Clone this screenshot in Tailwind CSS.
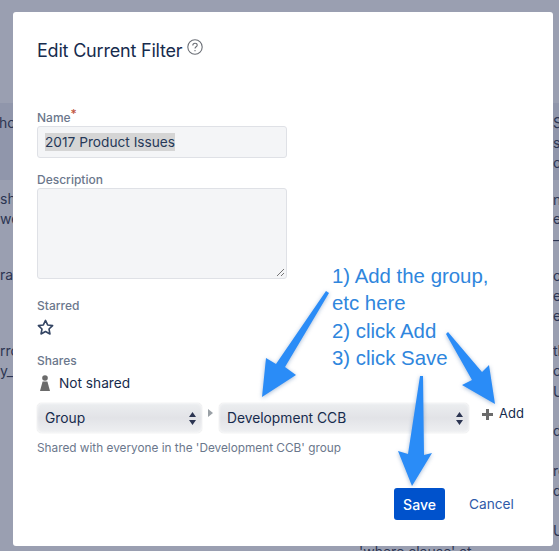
<!DOCTYPE html>
<html lang="en">
<head>
    <meta charset="UTF-8">
    <title>Edit Current Filter</title>
    <script src="https://cdn.jsdelivr.net/npm/@tailwindcss/browser@4"></script>
</head>
<body class="relative w-[559px] h-[551px] overflow-hidden bg-[#9a9fb1] font-['Inter','Liberation_Sans',sans-serif]">
    <!-- Page dimmed behind the dialog -->
    <div class="absolute left-0 top-[103px] w-full h-[77px] bg-[#9096ab]"></div>
    <div class="absolute inset-0 text-[14px] leading-5 text-[#2c3552]">
        <span class="absolute left-[-1px] top-[113px]">ho</span>
        <span class="absolute left-0 top-[189px]">sh</span>
        <span class="absolute left-0 top-[209px]">we</span>
        <span class="absolute left-0 top-[265px]">rap</span>
        <span class="absolute left-0 top-[341px]">rro</span>
        <span class="absolute left-0 top-[361px]">y_l</span>
        <span class="absolute left-[553px] top-[113px]">S</span>
        <span class="absolute left-[553px] top-[133px]">se</span>
        <span class="absolute left-[553px] top-[153px]">or</span>
        <span class="absolute left-[553px] top-[190px]">n</span>
        <span class="absolute left-[553px] top-[209px]">e</span>
        <span class="absolute left-[553px] top-[230px]">–</span>
        <span class="absolute left-[553px] top-[266px]">o</span>
        <span class="absolute left-[553px] top-[286px]">e</span>
        <span class="absolute left-[553px] top-[306px]">e</span>
        <span class="absolute left-[553px] top-[341px]">th</span>
        <span class="absolute left-[553px] top-[361px]">o</span>
        <span class="absolute left-[553px] top-[382px]">U</span>
        <span class="absolute left-[553px] top-[421px]">d</span>
        <span class="absolute left-[553px] top-[461px]">re</span>
        <span class="absolute left-[553px] top-[481px]">d</span>
        <span class="absolute left-[553px] top-[521px]">U</span>
        <span class="absolute left-[359px] top-[542px]">'where clause' at</span>
    </div>

    <!-- Dialog -->
    <div class="absolute left-[13px] top-[12px] w-[540px] h-[534px] bg-white rounded-[3px] pl-[24px] pt-[27px]">
        <div class="flex items-start h-[72px]">
            <h2 class="text-[18px] leading-[24px] tracking-[-0.2px] font-normal text-[#172b4d]">Edit Current Filter</h2>
            <svg class="ml-[5px]" width="16" height="16" viewBox="0 0 16 16" fill="none" stroke="#6b6f76" stroke-width="1.1">
                <circle cx="8" cy="8" r="7.2"/>
                <path d="M5.8 6.400c0-1.300 1-2.100 2.200-2.100s2.200.8 2.200 1.900c0 1.600-2.200 1.600-2.200 3.300"/>
                <path d="M8 11v1.200"/>
            </svg>
        </div>

        <div class="w-[250px]">
            <div class="h-[15px] text-[12px] leading-[15px] mt-[-1px] font-medium text-[#6b778c]">Name<span class="text-[#c0553f] relative top-[-4px]">*</span></div>
            <div class="h-[32px] mt-[1px] bg-[#f4f5f7] border border-[#dfe1e6] rounded-[3px] pl-[7px] flex items-center">
                <span class="bg-[#d5d5d5] text-[13.7px] leading-[18px] text-[#253858]">2017 Product Issues</span>
            </div>

            <div class="h-[15px] mt-[14px] text-[12px] leading-[15px] font-medium text-[#6b778c]">Description</div>
            <div class="relative h-[91px] mt-[1px] bg-[#f4f5f7] border border-[#dfe1e6] rounded-[3px]">
                <svg class="absolute right-[1px] bottom-[1px]" width="9" height="9" viewBox="0 0 9 9" stroke="#555" stroke-width="0.8">
                    <path d="M1 8 8 1M5 8l3-3"/>
                </svg>
            </div>

            <div class="h-[15px] mt-[19px] text-[12px] leading-[15px] font-medium text-[#6b778c]">Starred</div>
            <svg class="mt-[6px]" width="17" height="17" viewBox="0 0 16 16" fill="none" stroke="#344563" stroke-width="1.500" stroke-linejoin="round">
                <path d="M8 1.300l2 4.300 4.700.6-3.400 3.200.9 4.700L8 11.800l-4.200 2.300.9-4.700L1.300 6.200 6 5.600z"/>
            </svg>

            <div class="h-[15px] mt-[17px] text-[12px] leading-[15px] font-medium text-[#6b778c]">Shares</div>
        </div>

        <div class="flex items-center h-[18px] mt-[6px]">
            <svg width="12" height="16" viewBox="0 0 12 16" fill="#6b6b6b" class="ml-[2px]">
                <circle cx="6" cy="3" r="2.800"/>
                <path d="M3.600 6.500h4.800L11 16H1z"/>
            </svg>
            <span class="ml-[8px] text-[13.7px] text-[#172b4d]">Not shared</span>
        </div>

        <div class="flex items-center mt-[11px]">
            <div class="w-[165px] h-[30px] rounded-[5px] bg-linear-to-b from-[#eceef0] via-[#e2e3e7] to-[#eff0f2] shadow-[inset_0_0_3px_rgba(255,255,255,0.9),0_0_1px_rgba(0,0,0,0.25)] pl-[8px] pr-[6px] flex items-center justify-between text-[13.8px] text-[#172b4d]">
                <span>Group</span>
                <svg width="7" height="13" viewBox="0 0 7 13" fill="#2c3552"><path d="M3.500 0 7 5H0zM0 8h7l-3.500 5z"/></svg>
            </div>
            <svg class="mx-[6px] mt-[-10px]" width="5" height="8" viewBox="0 0 5 8" fill="#9aa0a6"><path d="M0 0l5 4-5 4z"/></svg>
            <div class="w-[250px] h-[30px] rounded-[5px] bg-linear-to-b from-[#eceef0] via-[#e2e3e7] to-[#eff0f2] shadow-[inset_0_0_3px_rgba(255,255,255,0.9),0_0_1px_rgba(0,0,0,0.25)] pl-[8px] pr-[6px] flex items-center justify-between text-[13.8px] text-[#172b4d]">
                <span>Development CCB</span>
                <svg width="7" height="13" viewBox="0 0 7 13" fill="#2c3552"><path d="M3.500 0 7 5H0zM0 8h7l-3.500 5z"/></svg>
            </div>
            <div class="flex items-center ml-[13px] mt-[-8px]">
                <svg width="11" height="11" viewBox="0 0 11 11" fill="#6b6b6b"><path d="M4 0h3v4h4v3H7v4H4V7H0V4h4z"/></svg>
                <span class="ml-[6px] text-[13px] text-[#172b4d]">Add</span>
            </div>
        </div>

        <p class="mt-[8px] text-[11.8px] leading-[15px] text-[#6b778c]">Shared with everyone in the 'Development CCB' group</p>

        <div class="flex items-center mt-[32px] ml-[357px]">
            <button class="w-[51px] h-[32px] rounded-[3px] bg-[#0052cc] text-white text-[14px] font-medium">Save</button>
            <span class="ml-[24px] text-[13.7px] text-[#2f5aa8]">Cancel</span>
        </div>
    </div>

    <!-- Annotation drawn over the screenshot -->
    <div class="absolute left-[332px] top-[263px] text-[20.4px] leading-[27.4px] text-[#2f86dd] font-['Liberation_Sans',sans-serif]">
        <div>1) Add the group,</div>
        <div>etc here</div>
        <div>2) click Add</div>
        <div>3) click Save</div>
    </div>
    <svg class="absolute inset-0 drop-shadow-[0_1px_2px_rgba(0,60,140,0.35)]" width="559" height="551" viewBox="0 0 559 551" fill="#2a8cf7">
        <path d="M326 291 329 293 285 367 296 375 262 397 266 358 276 364z"/>
        <path d="M446 334 448 332 482 372 489 365 495 404 462 385 472 380z"/>
        <path d="M420 376 423 376 424 455 432 453 412 486 398 451 408 454z"/>
    </svg>
</body>
</html>
